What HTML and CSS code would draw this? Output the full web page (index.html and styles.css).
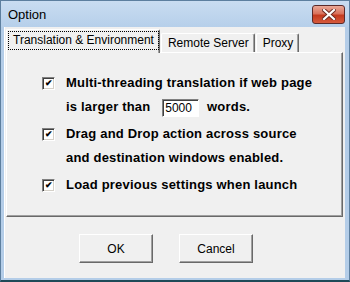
FILE: index.html
```html
<!DOCTYPE html>
<html lang="en">
<head>
    <meta charset="UTF-8">
    <title>Option</title>
    <link rel="stylesheet" href="styles.css">
</head>
<body>
    <div class="window">
        <div class="titlebar">
            <span class="title">Option</span>
            <button class="close-btn">
                <svg width="14" height="11" viewBox="0 0 14 11">
                    <path d="M2 1 L12 10 M12 1 L2 10" stroke="#6b2a22" stroke-width="4" stroke-linecap="square"/>
                    <path d="M2 1 L12 10 M12 1 L2 10" stroke="#ffffff" stroke-width="2.2" stroke-linecap="square"/>
                </svg>
            </button>
        </div>

        <div class="client">
            <div class="tabs">
                <div class="tab active"><span class="focus">Translation &amp; Environment</span></div>
                <div class="tab">Remote Server</div>
                <div class="tab">Proxy</div>
            </div>

            <div class="panel">
                <div class="option">
                    <span class="check">&#10004;</span>
                    <div class="label">
                        <div class="line">Multi-threading translation if web page</div>
                        <div class="line">is larger than <span class="num-input">5000</span> words.</div>
                    </div>
                </div>
                <div class="option">
                    <span class="check">&#10004;</span>
                    <div class="label">
                        <div class="line">Drag and Drop action across source</div>
                        <div class="line">and destination windows enabled.</div>
                    </div>
                </div>
                <div class="option">
                    <span class="check">&#10004;</span>
                    <div class="label">
                        <div class="line">Load previous settings when launch</div>
                    </div>
                </div>
            </div>

            <div class="buttons">
                <button class="btn">OK</button>
                <button class="btn">Cancel</button>
            </div>
        </div>
    </div>
</body>
</html>
```

FILE: styles.css
```css
body {
    margin: 0;
    padding: 0;
    font-family: 'Liberation Sans', Arial, sans-serif;
    background: #ffffff;
}

.window {
    width: 350px;
    height: 282px;
    box-sizing: border-box;
    background: #b4cde8;
    border: 1px solid #5d7f9f;
    border-bottom: 2px solid #1f4a58;
    display: flex;
    flex-direction: column;
}

.titlebar {
    height: 26px;
    flex-shrink: 0;
    display: flex;
    justify-content: space-between;
    align-items: flex-start;
    background: linear-gradient(#c9dcf1, #b6cfea);
}

.title {
    font-size: 13px;
    margin: 6px 0 0 7px;
    color: #000;
}

.close-btn {
    width: 33px;
    height: 19px;
    margin: 4px 4px 0 0;
    padding: 0;
    border: 1px solid #5a2a2a;
    border-radius: 3px;
    background: linear-gradient(#e9a897 0%, #d9725d 45%, #c43a1f 55%, #d65a3c 100%);
    display: flex;
    align-items: center;
    justify-content: center;
}

.client {
    flex: 1;
    margin: 0 4px 2px 3px;
    background: #f0f0f0;
    border-left: 1px solid #ffffff;
    padding: 3px 1px 0 1px;
    display: flex;
    flex-direction: column;
}

.tabs {
    display: flex;
    align-items: flex-end;
    height: 22px;
    flex-shrink: 0;
    font-size: 12px;
}

.tab {
    height: 19px;
    padding: 0 5px 0 6px;
    line-height: 18px;
    border-top: 1px solid #ffffff;
    border-left: 1px solid #ffffff;
    border-right: 1px solid #696969;
    box-shadow: inset -1px 0 #a0a0a0;
    border-radius: 2px 2px 0 0;
    box-sizing: border-box;
    margin-right: 1px;
}

.tab.active {
    height: 24px;
    padding: 2px 1px 0 2px;
    margin-right: 1px;
    position: relative;
    top: 1px;
    background: #f0f0f0;
}

.focus {
    display: block;
    padding: 0 4px;
    line-height: 17px;
    outline: 1px dotted #000;
}

.panel {
    height: 165px;
    box-sizing: border-box;
    flex-shrink: 0;
    border-top: 1px solid #ffffff;
    border-left: 1px solid #ffffff;
    border-right: 1px solid #696969;
    border-bottom: 1px solid #696969;
    box-shadow: inset -1px -1px #a0a0a0;
    margin-right: 1px;
    padding: 21px 0 0 35px;
    display: flex;
    flex-direction: column;
    gap: 3px;
}

.option {
    display: flex;
    gap: 11px;
    font-weight: bold;
    font-size: 13px;
    letter-spacing: 0.2px;
    color: #000;
}

.check {
    width: 11px;
    height: 11px;
    margin-top: 3px;
    border-top: 1px solid #808080;
    border-left: 1px solid #808080;
    border-right: 1px solid #ffffff;
    border-bottom: 1px solid #ffffff;
    box-shadow: inset 1px 1px #404040, inset -1px -1px #d4d0c8;
    background: #ffffff;
    font-size: 9px;
    line-height: 11px;
    letter-spacing: 0;
    text-align: center;
    flex-shrink: 0;
}

.line {
    height: 24px;
    line-height: 17px;
}

.num-input {
    display: inline-block;
    width: 33px;
    height: 16px;
    margin: 0 4px 0 8px;
    padding-left: 2px;
    font-size: 12px;
    font-weight: normal;
    letter-spacing: 0;
    line-height: 17px;
    background: #ffffff;
    border-top: 1px solid #808080;
    border-left: 1px solid #808080;
    border-right: 1px solid #ffffff;
    border-bottom: 1px solid #ffffff;
    box-shadow: inset 1px 1px #404040;
    vertical-align: middle;
}

.buttons {
    display: flex;
    gap: 26px;
    padding: 17px 0 0 73px;
}

.btn {
    width: 74px;
    height: 29px;
    font-family: 'Liberation Sans', Arial, sans-serif;
    font-size: 12px;
    background: #f0f0f0;
    border-top: 1px solid #ffffff;
    border-left: 1px solid #ffffff;
    border-right: 1px solid #696969;
    border-bottom: 1px solid #696969;
    box-shadow: inset -1px -1px #a0a0a0;
    padding: 0;
}
```
